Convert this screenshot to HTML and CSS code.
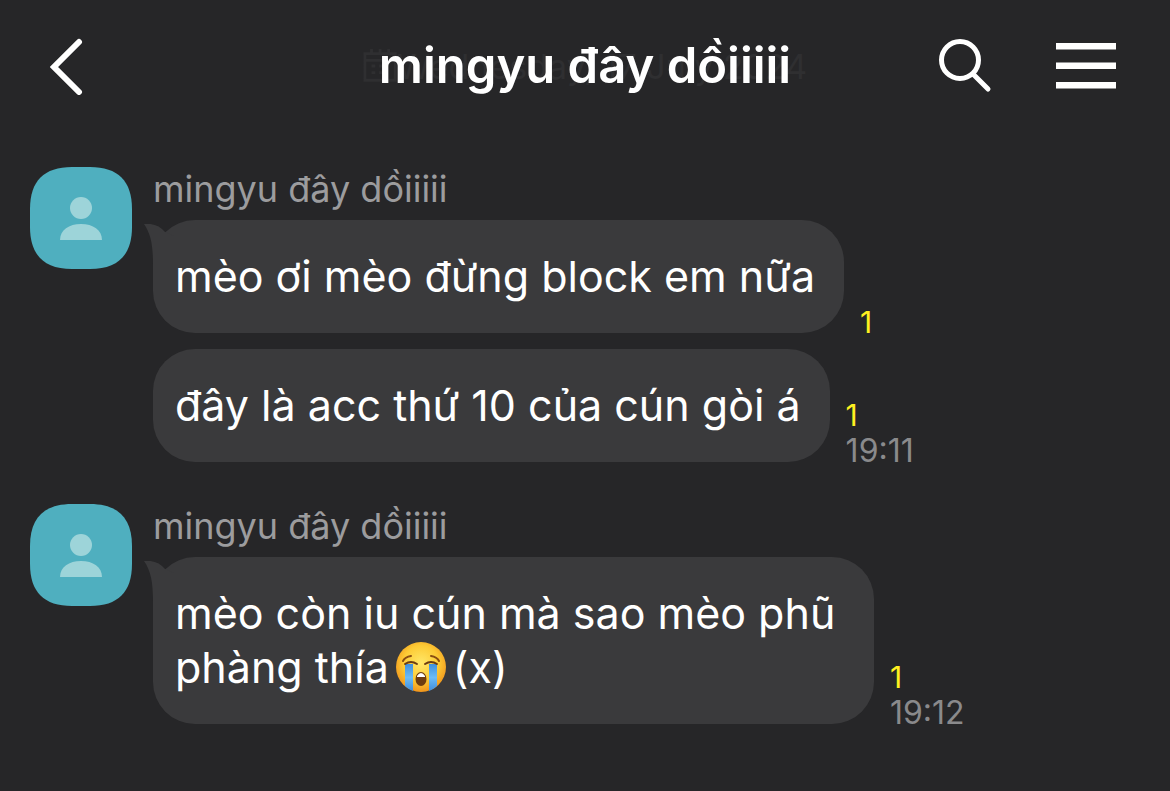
FILE: index.html
```html
<!DOCTYPE html>
<html lang="vi">

<head>
    <meta charset="UTF-8">
    <meta name="viewport" content="width=device-width, initial-scale=1.0">
    <title>mingyu đây dồiiiii</title>
    <link rel="stylesheet" href="styles.css">
</head>

<body>
    <header class="topbar">
        <button class="icon-btn" type="button" aria-label="Quay lại">
            <svg width="36" height="58" viewBox="0 0 36 58" fill="none" stroke="#fff" stroke-width="6" stroke-linecap="round">
                <path d="M29 5 4 30l25 25" />
            </svg>
        </button>

        <div class="heading">
            <div class="date">
                <svg width="36" height="36" viewBox="0 0 36 36" fill="none" stroke="currentColor" stroke-width="3">
                    <path d="M2 5h32v28H2zM2 12h32M9 0v6M18 0v6M27 0v6M9 18h4M17 18h4M9 25h4M17 25h4" />
                </svg>
                <span>Wednesday, 17 July 2024</span>
            </div>
            <h1>mingyu đây dồiiiii</h1>
        </div>

        <div class="actions">
            <button class="icon-btn" type="button" aria-label="Tìm kiếm">
                <svg width="56" height="56" viewBox="0 0 56 56" fill="none" stroke="#fff" stroke-width="5" stroke-linecap="round">
                    <circle cx="22" cy="22" r="18.500" />
                    <path d="M36 37l14 14" />
                </svg>
            </button>
            <button class="icon-btn" type="button" aria-label="Menu">
                <svg width="64" height="46" viewBox="0 0 64 46" fill="#fff">
                    <path d="M0 0h60v6.500H0zM0 19.500h60V26H0zM0 39h60v6.500H0z" />
                </svg>
            </button>
        </div>
    </header>

    <main class="chat">
        <section class="group">
            <svg class="avatar" width="102" height="102" viewBox="0 0 102 102">
                <path d="M42 0h18C88 0 102 14 102 42v18c0 28-14 42-42 42H42C14 102 0 88 0 60V42C0 14 14 0 42 0z" fill="#4fafbf" />
                <circle cx="51" cy="41" r="11" fill="#9dd4d9" />
                <path d="M30 73c0-10 9-16 21-16s21 6 21 16z" fill="#9dd4d9" />
            </svg>
            <div class="content">
                <h2 class="name">mingyu đây dồiiiii</h2>
                <div class="row">
                    <div class="bubble">
                        <svg class="tail" width="30" height="40" viewBox="0 0 30 40">
                            <path d="M0 0c9-1 16 2 21 8l9 4v28H9C9 22 7 10 0 0z" fill="#3a3a3c" />
                        </svg>
                        <p>mèo ơi mèo đừng block em nữa</p>
                    </div>
                    <div class="meta"><span class="unread">1</span></div>
                </div>
                <div class="row">
                    <div class="bubble">
                        <p>đây là acc thứ 10 của cún gòi á</p>
                    </div>
                    <div class="meta"><span class="unread">1</span><time>19:11</time></div>
                </div>
            </div>
        </section>

        <section class="group">
            <svg class="avatar" width="102" height="102" viewBox="0 0 102 102">
                <path d="M42 0h18C88 0 102 14 102 42v18c0 28-14 42-42 42H42C14 102 0 88 0 60V42C0 14 14 0 42 0z" fill="#4fafbf" />
                <circle cx="51" cy="41" r="11" fill="#9dd4d9" />
                <path d="M30 73c0-10 9-16 21-16s21 6 21 16z" fill="#9dd4d9" />
            </svg>
            <div class="content">
                <h2 class="name">mingyu đây dồiiiii</h2>
                <div class="row">
                    <div class="bubble wrapped">
                        <svg class="tail" width="30" height="40" viewBox="0 0 30 40">
                            <path d="M0 0c9-1 16 2 21 8l9 4v28H9C9 22 7 10 0 0z" fill="#3a3a3c" />
                        </svg>
                        <p>mèo còn iu cún mà sao mèo phũ phàng thía<svg class="emoji" width="52" height="52" viewBox="0 0 52 52" role="img" aria-label="Khóc to">
                                <defs>
                                    <radialGradient id="face" cx="50%" cy="42%" r="58%">
                                        <stop offset="0" stop-color="#ffe768" />
                                        <stop offset=".6" stop-color="#fdcb35" />
                                        <stop offset="1" stop-color="#f0941c" />
                                    </radialGradient>
                                    <linearGradient id="tears" x1="0" y1="0" x2="0" y2="1">
                                        <stop offset="0" stop-color="#3f8fdc" />
                                        <stop offset=".5" stop-color="#6dbcf5" />
                                        <stop offset="1" stop-color="#3f8ddb" />
                                    </linearGradient>
                                </defs>
                                <circle cx="26" cy="26" r="25" fill="url(#face)" />
                                <path d="M10 23h8v27q-5-2-8-5zM34 23h8v22q-3 3-8 5z" fill="url(#tears)" />
                                <path d="M8 20q2-4 8-5M36 15q6 1 8 5" fill="none" stroke="#8a4d12" stroke-width="2" stroke-linecap="round" />
                                <path d="M10 23q6-4 12 0M30 23q6-4 12 0" fill="none" stroke="#6b3c12" stroke-width="2" stroke-linecap="round" />
                                <ellipse cx="26" cy="38" rx="5.500" ry="7" fill="#6e3d10" />
                                <path d="M22 35q4-6 8 0v1h-8z" fill="#fff" />
                            </svg>(x)</p>
                    </div>
                    <div class="meta"><span class="unread">1</span><time>19:12</time></div>
                </div>
            </div>
        </section>
    </main>
</body>

</html>
```
FILE: styles.css
```css
* {
    box-sizing: border-box;
}

body {
    margin: 0;
    min-height: 100vh;
    background: #262628;
    color: #fff;
    font-family: Inter, "Noto Sans", sans-serif;
}

h1,
h2,
p {
    margin: 0;
}

.topbar {
    display: grid;
    grid-template-columns: 1fr auto 1fr;
    align-items: center;
    height: 110px;
    padding: 22px 50px 0;
}

.icon-btn {
    display: flex;
    justify-self: start;
    padding: 0;
    border: 0;
    background: none;
    cursor: pointer;
}

.heading {
    position: relative;
}

h1 {
    position: relative;
    font-size: 49px;
    font-weight: 600;
    line-height: 60px;
    white-space: nowrap;
}

/* date chip that shows faintly through the header */
.date {
    position: absolute;
    inset: 0 -16px;
    display: flex;
    align-items: center;
    justify-content: space-between;
    color: #2f2f31;
    font-size: 34px;
    white-space: nowrap;
}

.actions {
    display: flex;
    align-items: center;
    justify-content: flex-end;
    gap: 62px;
}

.chat {
    display: flex;
    flex-direction: column;
    gap: 42px;
    padding: 57px 30px;
}

.group {
    display: flex;
    gap: 21px;
}

.avatar {
    flex: none;
}

.content {
    display: flex;
    flex-direction: column;
    gap: 16px;
}

.name {
    margin-bottom: -7px;
    color: #9c9c9e;
    font-size: 36px;
    font-weight: 400;
    line-height: 44px;
}

.row {
    display: flex;
    align-items: flex-end;
    gap: 16px;
}

.bubble {
    position: relative;
    padding: 29px 29px 30px 22px;
    border-radius: 42px;
    background: #3a3a3c;
    font-size: 43px;
    line-height: 54px;
}

.wrapped {
    max-width: 721px;
}

.tail {
    position: absolute;
    top: 4px;
    left: -9px;
}

.bubble p {
    position: relative;
}

.emoji {
    margin: 0 6px;
    vertical-align: -10px;
}

.meta {
    display: flex;
    flex-direction: column;
    margin-bottom: -7px;
    color: #8a8a8c;
    font-size: 32px;
    line-height: 36px;
}

.unread {
    color: #fff020;
    font-size: 30px;
}
```
